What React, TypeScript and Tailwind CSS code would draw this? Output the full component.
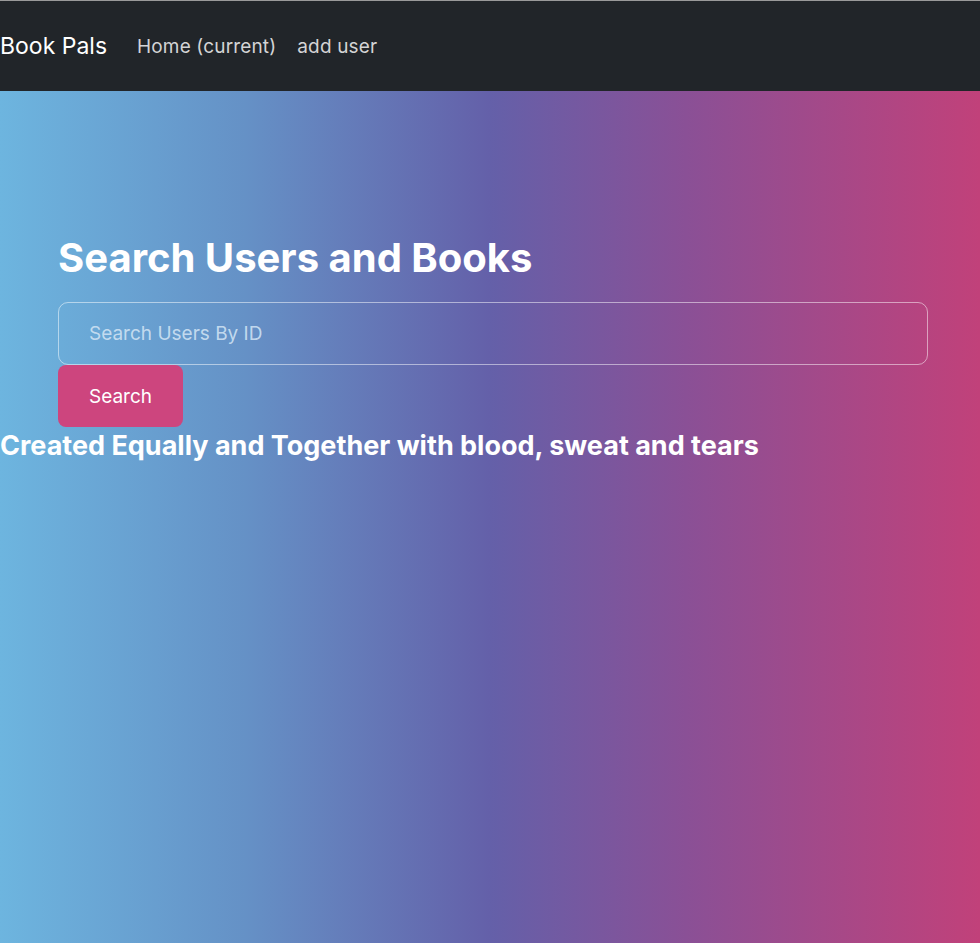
import { useState } from 'react';

export default function App() {
  const [query, setQuery] = useState('');

  return (
    <div className="flex flex-col min-h-[943px] font-['Inter','Noto_Sans',sans-serif] text-white">
      <nav className="h-[91px] bg-[#212529] border-t border-[#9a9a9a] flex items-center gap-[30px]">
        <span className="text-[23px] text-white leading-none">Book Pals</span>
        <div className="flex gap-[21px] text-[19px] text-[#d4d4d5] leading-none tracking-[0.15px]">
          <a href="#">Home (current)</a>
          <a href="#">add user</a>
        </div>
      </nav>

      <main className="flex-1 bg-[linear-gradient(to_right,#6db5df_0%,#6591c6_25%,#6460a9_50%,#8a5096_70%,#c1417a_100%)]">
        <div className="px-[58px] pt-[143px]">
          <h1 className="text-[40px] font-bold leading-[48px]">Search Users and Books</h1>
          <input
            value={query}
            onChange={e => setQuery(e.target.value)}
            placeholder="Search Users By ID"
            className="mt-[20px] w-[870px] h-[63px] rounded-[10px] border border-white/50 bg-transparent px-[30px] text-[19px] text-white placeholder:text-[#cfe2f3]/90 outline-none"
          />
          <button className="block w-[125px] h-[62px] rounded-[8px] bg-[#cd457e] text-[19px] text-white pt-[2px]">Search</button>
        </div>
        <p className="mt-[1px] text-[27px] font-bold leading-[36px]">
          Created Equally and Together with blood, sweat and tears
        </p>
      </main>
    </div>
  );
}
